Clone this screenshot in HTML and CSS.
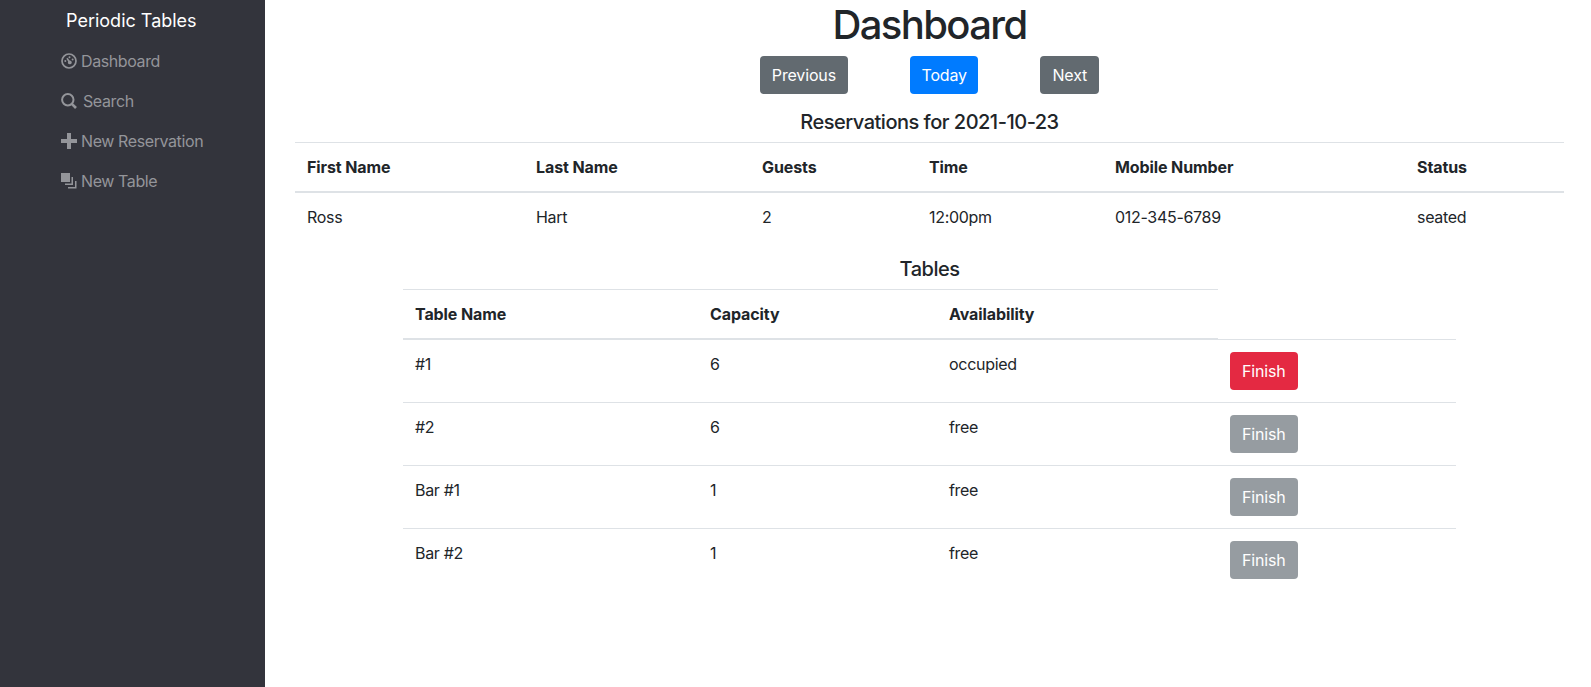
FILE: index.html

```html
<!DOCTYPE html>
<html lang="en">
<head>
  <meta charset="UTF-8">
  <title>Periodic Tables</title>
  <link rel="stylesheet" href="styles.css">
</head>
<body>
  <div class="layout">
    <nav class="sidebar">
      <div class="brand">Periodic Tables</div>
      <ul class="nav-list">
        <li>
          <a href="#">
            <svg class="icon" viewBox="0 0 16 16"><circle cx="8" cy="8" r="7" fill="none" stroke="currentColor" stroke-width="1.7"/><path d="M8.500 9 6 5.200" stroke="currentColor" stroke-width="1.6" fill="none"/><circle cx="8.800" cy="9.400" r="1.900" fill="currentColor"/><circle cx="8.500" cy="4.200" r="1" fill="currentColor"/><circle cx="11.600" cy="6.400" r="1" fill="currentColor"/><circle cx="4.300" cy="8" r="1" fill="currentColor"/></svg>
            Dashboard
          </a>
        </li>
        <li>
          <a href="#" class="gap-wide">
            <svg class="icon" viewBox="0 0 16 16"><circle cx="6.800" cy="6.800" r="5.700" fill="none" stroke="currentColor" stroke-width="2"/><path d="M10.800 10.800l4.200 4.200" stroke="currentColor" stroke-width="2.600" fill="none"/></svg>
            Search
          </a>
        </li>
        <li>
          <a href="#">
            <svg class="icon" viewBox="0 0 16 16"><path d="M6 0h4v6h6v4h-6v6H6v-6H0V6h6z" fill="currentColor"/></svg>
            New Reservation
          </a>
        </li>
        <li>
          <a href="#">
            <svg class="icon" viewBox="0 0 16 16"><rect x="0" y="0" width="9" height="9" fill="currentColor"/><path d="M10.500 4v6.500H4V12h8V4z M14 8v6H7v1.500h8.500V8z" fill="currentColor"/></svg>
            New Table
          </a>
        </li>
      </ul>
    </nav>

    <main class="content">
      <h1>Dashboard</h1>
      <div class="date-buttons">
        <button class="btn btn-gray">Previous</button>
        <button class="btn btn-blue">Today</button>
        <button class="btn btn-gray">Next</button>
      </div>
      <h4>Reservations for 2021-10-23</h4>
      <table class="table reservations">
        <thead>
          <tr>
            <th>First Name</th>
            <th>Last Name</th>
            <th>Guests</th>
            <th>Time</th>
            <th>Mobile Number</th>
            <th>Status</th>
          </tr>
        </thead>
        <tbody>
          <tr>
            <td>Ross</td>
            <td>Hart</td>
            <td>2</td>
            <td>12:00pm</td>
            <td>012-345-6789</td>
            <td>seated</td>
          </tr>
        </tbody>
      </table>

      <h4 class="tables-title">Tables</h4>
      <table class="table seating">
        <thead>
          <tr>
            <th>Table Name</th>
            <th>Capacity</th>
            <th>Availability</th>
          </tr>
        </thead>
        <tbody>
          <tr>
            <td>#1</td>
            <td>6</td>
            <td>occupied</td>
            <td><button class="btn btn-red">Finish</button></td>
          </tr>
          <tr>
            <td>#2</td>
            <td>6</td>
            <td>free</td>
            <td><button class="btn btn-muted">Finish</button></td>
          </tr>
          <tr>
            <td>Bar #1</td>
            <td>1</td>
            <td>free</td>
            <td><button class="btn btn-muted">Finish</button></td>
          </tr>
          <tr>
            <td>Bar #2</td>
            <td>1</td>
            <td>free</td>
            <td><button class="btn btn-muted">Finish</button></td>
          </tr>
        </tbody>
      </table>
    </main>
  </div>
</body>
</html>
```

FILE: styles.css

```css
* {
  box-sizing: border-box;
}
html, body {
  height: 100%;
}
body {
  margin: 0;
  font-family: Inter, "Liberation Sans", sans-serif;
  font-size: 16px;
  line-height: 24px;
  color: #212529;
  background: #fff;
}
.layout {
  display: flex;
  min-height: 100%;
}
.sidebar {
  flex: 0 0 265px;
  background: #33343c;
  padding-top: 9px;
}
.brand {
  color: #fff;
  font-size: 18px;
  line-height: 24px;
  padding-left: 66px;
}
.nav-list {
  list-style: none;
  margin: 8px 0 0;
  padding: 0 0 0 61px;
}
.nav-list li {
  height: 40px;
  display: flex;
  align-items: center;
}
.nav-list a {
  display: flex;
  align-items: center;
  gap: 4px;
  color: #94959a;
  letter-spacing: -0.4px;
  text-decoration: none;
}
.nav-list a.gap-wide {
  gap: 6px;
}
.icon {
  width: 16px;
  height: 16px;
  flex: none;
}
.content {
  flex: 1;
  padding: 0 27px 0 30px;
}
h1 {
  margin: 0;
  padding-top: 1px;
  font-size: 40px;
  line-height: 48px;
  font-weight: 500;
  letter-spacing: -1.6px;
  text-align: center;
}
.date-buttons {
  display: flex;
  justify-content: center;
  gap: 62px;
  margin-top: 7px;
}
.btn {
  font: inherit;
  letter-spacing: -0.15px;
  color: #fff;
  border: 0;
  border-radius: 4px;
  height: 38px;
  padding: 0 12px;
}
.btn-gray {
  background: #626a70;
}
.btn-blue {
  background: #007bff;
  padding: 0 11.5px;
}
.btn-red {
  background: #e42942;
}
.btn-muted {
  background: #969ca1;
}
h4 {
  margin: 0;
  font-size: 20px;
  line-height: 24px;
  font-weight: 500;
  letter-spacing: -0.5px;
  text-align: center;
}
.date-buttons + h4 {
  margin-top: 16px;
}
.table {
  border-collapse: collapse;
  table-layout: fixed;
}
.table th, .table td {
  text-align: left;
  padding: 12px;
  vertical-align: top;
  letter-spacing: -0.3px;
  border-top: 1px solid #dee2e6;
}
.table th {
  font-weight: 700;
  letter-spacing: -0.1px;
  border-bottom: 2px solid #dee2e6;
}
.reservations {
  width: 100%;
  margin-top: 8px;
}
.reservations td {
  border-top: 0;
}
.reservations th:nth-child(1) { width: 229px; }
.reservations th:nth-child(2) { width: 226px; }
.reservations th:nth-child(3) { width: 167px; }
.reservations th:nth-child(4) { width: 186px; }
.reservations th:nth-child(5) { width: 302px; }
.tables-title {
  margin-top: 16px;
}
.seating {
  width: 1053px;
  margin: 8px auto 0;
}
.seating td:nth-child(1), .seating th:nth-child(1) { width: 295px; }
.seating td:nth-child(2), .seating th:nth-child(2) { width: 239px; }
.seating td:nth-child(3), .seating th:nth-child(3) { width: 281px; }
```
